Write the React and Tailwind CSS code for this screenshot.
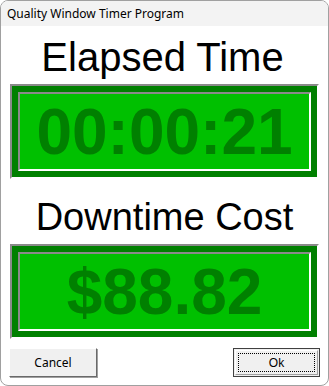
import React from 'react';

const Panel = ({ value }) => (
  <div className="mx-[9px] h-[95px] border-2 border-t-[#8a8a8a] border-l-[#8a8a8a] border-b-white border-r-white bg-[#008000] p-[6px]">
    <div className="flex h-full items-center justify-center border-2 border-t-[#8a8a8a] border-l-[#8a8a8a] border-b-white border-r-white bg-[#00c000]">
      <span className="text-[64px] font-bold leading-none text-[#008000]">{value}</span>
    </div>
  </div>
);

export default function App() {
  return (
    <div
      className="flex h-[386px] w-[329px] flex-col overflow-hidden rounded-[8px] border border-[#a0a0a0] bg-white"
      style={{ fontFamily: '"Liberation Sans", Arial, sans-serif' }}
    >
      <div className="flex h-[25px] shrink-0 items-center bg-[#f3f3f3] pl-[6px] text-[12px] text-black" style={{ fontFamily: '"Noto Sans", "Liberation Sans", sans-serif' }}>
        Quality Window Timer Program
      </div>

      <div className="mt-[11px] mb-[7px] pr-[4px] text-center text-[40px] leading-none text-black">Elapsed Time</div>
      <Panel value="00:00:21" />

      <div className="mt-[19px] mb-[8px] text-center text-[38px] leading-none text-black">Downtime Cost</div>
      <Panel value="$88.82" />

      <div className="mt-[9px] flex justify-between px-[8px]">
        <button className="h-[29px] w-[88px] border border-t-white border-l-white border-b-[#696969] border-r-[#696969] bg-[#f0f0f0] text-[12px] text-black shadow-[1px_1px_0_#a0a0a0]" style={{ fontFamily: '"Noto Sans", "Liberation Sans", sans-serif' }}>
          Cancel
        </button>
        <button className="h-[29px] w-[87px] border border-[#404040] bg-[#f0f0f0] p-[1px]">
          <div className="flex h-full w-full items-center justify-center border border-t-white border-l-white border-b-[#a0a0a0] border-r-[#a0a0a0] p-[2px]">
            <div className="flex h-full w-full items-center justify-center border border-dotted border-black text-[12px] text-black" style={{ fontFamily: '"Liberation Sans", sans-serif' }}>
              Ok
            </div>
          </div>
        </button>
      </div>
    </div>
  );
}
